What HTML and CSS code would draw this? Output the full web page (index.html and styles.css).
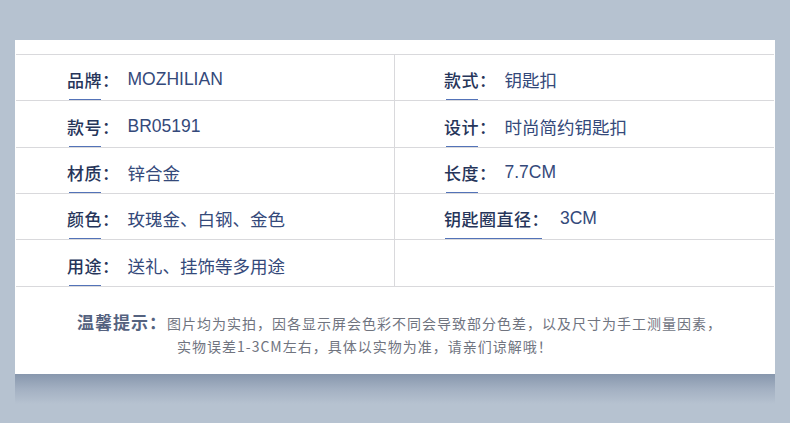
FILE: index.html
```html
<!DOCTYPE html>
<html lang="zh">
<head>
<meta charset="utf-8">
<link rel="stylesheet" href="styles.css">
</head>
<body>
<div class="page">
  <div class="card">
    <div class="table">
      <div class="row">
        <div class="cell left">
          <div class="label"><span class="ltext">品牌：</span><span class="uline"></span></div>
          <div class="value">MOZHILIAN</div>
        </div>
        <div class="cell right">
          <div class="label"><span class="ltext">款式：</span><span class="uline"></span></div>
          <div class="value">钥匙扣</div>
        </div>
      </div>
      <div class="row tall">
        <div class="cell left">
          <div class="label"><span class="ltext">款号：</span><span class="uline"></span></div>
          <div class="value">BR05191</div>
        </div>
        <div class="cell right">
          <div class="label"><span class="ltext">设计：</span><span class="uline"></span></div>
          <div class="value">时尚简约钥匙扣</div>
        </div>
      </div>
      <div class="row">
        <div class="cell left">
          <div class="label"><span class="ltext">材质：</span><span class="uline"></span></div>
          <div class="value">锌合金</div>
        </div>
        <div class="cell right">
          <div class="label"><span class="ltext">长度：</span><span class="uline"></span></div>
          <div class="value">7.7CM</div>
        </div>
      </div>
      <div class="row">
        <div class="cell left">
          <div class="label"><span class="ltext">颜色：</span><span class="uline"></span></div>
          <div class="value">玫瑰金、白钢、金色</div>
        </div>
        <div class="cell right">
          <div class="label"><span class="ltext">钥匙圈直径：</span><span class="uline long"></span></div>
          <div class="value wide">3CM</div>
        </div>
      </div>
      <div class="row tall">
        <div class="cell left">
          <div class="label"><span class="ltext">用途：</span><span class="uline"></span></div>
          <div class="value">送礼、挂饰等多用途</div>
        </div>
        <div class="cell right"></div>
      </div>
    </div>
    <div class="note">
      <p class="line1"><span class="tip">温馨提示：</span>图片均为实拍，因各显示屏会色彩不同会导致部分色差，以及尺寸为手工测量因素，</p>
      <p class="line2">实物误差1-3CM左右，具体以实物为准，请亲们谅解哦！</p>
    </div>
  </div>
  <div class="shadow"></div>
</div>
</body>
</html>
```

FILE: styles.css
```css
html, body {
  margin: 0;
  padding: 0;
  background: #b6c2d0;
  width: 790px;
  height: 423px;
  overflow: hidden;
  font-family: "Liberation Sans", "Noto Sans CJK SC", sans-serif;
}

.page {
  padding: 40px 15px 0 15px;
}

.card {
  background: #ffffff;
  width: 760px;
  height: 334px;
  box-sizing: border-box;
  padding-top: 14px;
}

.table {
  margin: 0 1px;
  border-top: 1px solid #d9d9dc;
}

.row {
  display: flex;
  height: 45px;
  border-bottom: 1px solid #d9d9dc;
}

.row.tall {
  height: 46px;
}

.cell {
  display: flex;
  align-items: stretch;
  box-sizing: border-box;
}

.cell.left {
  width: 379px;
  padding-left: 51px;
  border-right: 1px solid #d9d9dc;
}

.cell.right {
  flex: 1;
  padding-left: 49px;
}

.label {
  display: flex;
  flex-direction: column;
}

.ltext {
  flex: 1;
  display: flex;
  align-items: center;
  padding-top: 5px;
  font-size: 17px;
  font-weight: 500;
  letter-spacing: 0.5px;
  color: #26355a;
  font-family: "Noto Sans CJK SC", sans-serif;
}

.uline {
  display: block;
  width: 32px;
  height: 1px;
  margin-left: 2px;
  background: #5373b8;
}

.uline.long {
  width: 97px;
  margin-left: 1px;
}

.value {
  display: flex;
  align-items: center;
  padding-top: 4px;
  margin-left: 8px;
  font-size: 17.5px;
  color: #34497a;
}

.value.wide {
  margin-left: 11px;
}

.note {
  padding: 23px 0 0 62px;
}

.note p {
  margin: 0;
  line-height: 23px;
  font-size: 14px;
  letter-spacing: 1px;
  color: #70747f;
  font-family: "Noto Sans CJK SC", sans-serif;
}

.tip {
  font-size: 17px;
  font-weight: bold;
  letter-spacing: 1px;
  color: #55627f;
}

.note .line2 {
  margin-left: 100px;
}

.shadow {
  width: 760px;
  height: 30px;
  background: linear-gradient(to bottom, #8797ad 0%, #a3b0c2 50%, #b6c2d0 100%);
}
```
